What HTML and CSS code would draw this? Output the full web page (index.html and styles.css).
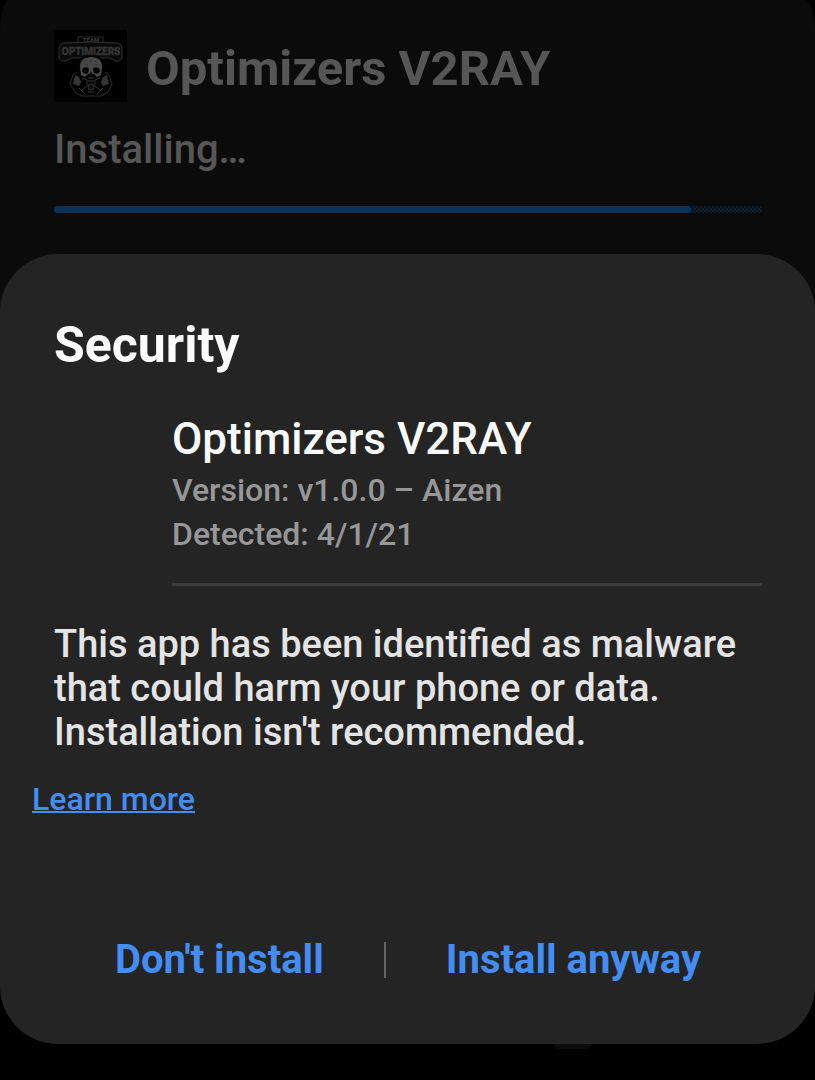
FILE: index.html
```html
<!DOCTYPE html>
<html lang="en">
<head>
<meta charset="utf-8">
<meta name="viewport" content="width=device-width, initial-scale=1">
<title>Optimizers V2RAY</title>
<link rel="stylesheet" href="styles.css">
</head>
<body>
<main class="screen">
  <section class="installer">
    <header class="installer-head">
      <svg class="logo" viewBox="0 0 73 72" aria-hidden="true">
        <rect width="73" height="72" fill="#000"/>
        <path d="M24 13V7H49V13" fill="none" stroke="#2c2c2c" stroke-width="1"/>
        <text class="logo-team" x="37" y="12" text-anchor="middle">TEAM</text>
        <path d="M9 13Q37 11 64 13Q68 14 68 18V27Q67 32 62 31L56 28H18L11 31Q6 32 5 27V18Q5 14 9 13Z" fill="#0a0a0a" stroke="#303030" stroke-width="1"/>
        <text class="logo-name" x="37" y="25" text-anchor="middle">OPTIMIZERS</text>
        <path d="M23 42Q21 25 37 25Q53 25 51 42L55 45L58 54L54 62L48 66H27L21 62L16 54L19 45Z" fill="#020202"/>
        <path d="M23 42L19 45L16 54L21 62L27 66H48L54 62L58 54L55 45L51 42" fill="none" stroke="#2c2c2c" stroke-width="1"/>
        <path d="M26 37Q26 27 37 27Q48 27 48 37L47 45L43 47L40 44H34L31 47L27 45Z" fill="#484848"/>
        <path d="M29 38Q34 36 35 39L34 43Q30 45 28 41ZM45 38Q40 36 39 39L40 43Q44 45 46 41Z" fill="#050505"/>
        <path d="M37 41L35 45H39Z" fill="#0c0c0c"/>
        <path d="M30 32L33 30M35 31H38M40 30L43 33M31 35L34 34M40 34L43 35" fill="none" stroke="#333" stroke-width="1"/>
        <path d="M21 45L25 47L27 52L25 56L19 54ZM53 45L49 47L47 52L49 56L55 54Z" fill="#343434"/>
        <path d="M28 48L33 50V56L28 60M46 48L41 50V56L46 60M34 48H40M34 51H40M34 62H40M25 58L31 64M49 58L43 64" fill="none" stroke="#303030" stroke-width="1"/>
        <circle cx="37" cy="57" r="3" fill="#111" stroke="#333"/>
      </svg>
      <h1 class="installer-title">Optimizers V2RAY</h1>
    </header>
    <label class="status" for="install-progress">Installing…</label>
    <progress class="bar" id="install-progress" value="90" max="100"></progress>
  </section>

  <section class="sheet" role="dialog" aria-labelledby="sheet-title">
    <h2 class="sheet-title" id="sheet-title">Security</h2>
    <div class="app">
      <h3 class="app-name">Optimizers V2RAY</h3>
      <p class="app-meta">Version: v1.0.0 – Aizen</p>
      <p class="app-meta">Detected: 4/1/21</p>
    </div>
    <p class="warning">This app has been identified as malware that could harm your phone or data. Installation isn't recommended.</p>
    <a class="learn" href="#">Learn more</a>
    <div class="actions">
      <button class="action" type="button">Don't install</button>
      <span class="divider"></span>
      <button class="action" type="button">Install anyway</button>
    </div>
  </section>
  <div class="nav-hint"></div>
</main>
</body>
</html>
```
FILE: styles.css
```css
* {
  box-sizing: border-box;
}

body {
  margin: 0;
  background: #000;
  font-family: Roboto, "Liberation Sans", sans-serif;
  font-weight: 500;
}

h1, h2, h3, p {
  margin: 0;
}

.screen {
  min-height: 100vh;
  overflow: hidden;
}

.installer {
  display: flex;
  flex-direction: column;
  padding: 30px 53px 101px 54px;
  background: #0b0b0b;
  border-radius: 10px 10px 0 0 / 32px 32px 0 0;
}

.installer-head {
  display: flex;
  align-items: center;
  gap: 19px;
}

.logo {
  flex: none;
  width: 73px;
  height: 72px;
}

.logo-team {
  font: 700 6px Roboto, sans-serif;
  fill: #3c3c3c;
}

.logo-name {
  font: 700 10px Roboto, sans-serif;
  fill: #363636;
  stroke: #363636;
  stroke-width: 0.5px;
}

.installer-title {
  padding-top: 5px;
  font-size: 49px;
  line-height: 56px;
  font-weight: 700;
  color: #565656;
}

.status {
  margin-top: 24px;
  font-size: 40px;
  line-height: 48px;
  color: #565656;
}

.bar {
  appearance: none;
  display: block;
  width: 100%;
  height: 7px;
  margin-top: 32px;
  border: 0;
  border-radius: 4px;
  overflow: hidden;
  background: transparent;
}

.bar::-webkit-progress-bar {
  background: repeating-conic-gradient(#0b2236 0 25%, #0b0f13 0 50%) 0 0 / 4px 4px;
}

.bar::-webkit-progress-value {
  background: #0b3158;
  border-radius: 0 4px 4px 0;
}

.sheet {
  position: relative;
  display: flex;
  flex-direction: column;
  margin-top: -60px;
  padding: 63px 53px 60px 54px;
  background: #242424;
  border-radius: 58px;
}

.sheet-title {
  font-size: 50px;
  line-height: 56px;
  font-weight: 700;
  color: #fafafa;
}

.app {
  margin: 40px 0 0 118px;
  padding-bottom: 27px;
  border-bottom: 3px solid #3b3b3b;
}

.app-name {
  margin-bottom: 3px;
  font-size: 44px;
  line-height: 52px;
  font-weight: 500;
  color: #fafafa;
}

.app-meta {
  font-size: 32px;
  line-height: 44px;
  color: #979797;
}

.warning {
  margin-top: 36px;
  font-size: 38px;
  line-height: 44px;
  color: #e4e4e4;
}

.learn {
  align-self: flex-start;
  margin: 23px 0 0 -22px;
  font-size: 32px;
  line-height: 44px;
  color: #438df5;
  text-decoration-thickness: 2px;
}

.actions {
  display: flex;
  align-items: center;
  justify-content: center;
  margin-top: 115px;
}

.action {
  padding: 0 60px;
  border: 0;
  background: none;
  font: 700 40px/48px Roboto, "Liberation Sans", sans-serif;
  color: #438df5;
  white-space: nowrap;
  cursor: pointer;
}

.divider {
  flex: none;
  width: 2px;
  height: 36px;
  background: #626262;
}

.nav-hint {
  width: 37px;
  height: 5px;
  margin-left: 68%;
  background: #0c0c0c;
  border-radius: 0 0 5px 5px;
}
```
